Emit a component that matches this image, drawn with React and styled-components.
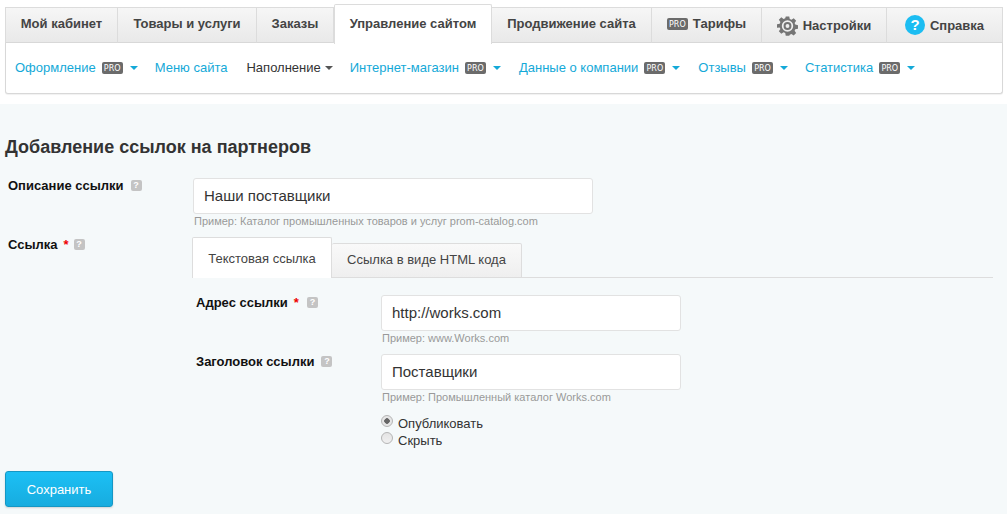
import React from "react";
import styled, { createGlobalStyle } from "styled-components";

const GlobalStyle = createGlobalStyle`
  html, body {
    margin: 0;
    padding: 0;
    height: 100%;
    background: #f5f9fa;
    font-family: "Liberation Sans", Arial, sans-serif;
    color: #333;
    overflow: hidden;
  }
`;

const Header = styled.header`
  background: #fff;
  height: 104px;
  padding: 3px 4px 0 5px;
  box-sizing: border-box;
`;

const TabStrip = styled.nav`
  display: flex;
  align-items: flex-end;
  height: 40px;
`;

const TopTab = styled.a`
  box-sizing: border-box;
  width: ${(p) => p.$w}px;
  height: ${(p) => (p.$active ? 40 : 36)}px;
  display: flex;
  align-items: center;
  justify-content: center;
  gap: ${(p) => p.$gap || 0}px;
  padding-bottom: ${(p) => (p.$active ? 3 : p.$pb ?? 3)}px;
  padding-top: ${(p) => p.$pt || 0}px;
  font-size: 13px;
  font-weight: bold;
  color: #444;
  background: ${(p) => (p.$active ? "#fff" : "linear-gradient(#f6f6f6, #e9e9e9)")};
  border: 1px solid #dcdcdc;
  border-left: ${(p) => (p.$first || p.$active ? "1px solid #dcdcdc" : "none")};
  border-bottom: ${(p) => (p.$active ? "none" : "1px solid #d8d8d8")};
  border-radius: ${(p) => (p.$active ? "2px 2px 0 0" : "0")};
  position: relative;
  z-index: ${(p) => (p.$active ? 1 : 0)};
  margin-bottom: ${(p) => (p.$active ? -1 : 0)}px;
`;

const SubNav = styled.div`
  box-sizing: border-box;
  height: 51px;
  display: flex;
  align-items: flex-start;
  padding: 15px 0 0 9px;
  background: #fff;
  border: 1px solid #d8d8d8;
  border-top: none;
  border-radius: 0 0 3px 3px;
  box-shadow: 0 1px 1px rgba(0, 0, 0, 0.06);
`;

const SubLink = styled.a`
  display: flex;
  align-items: center;
  height: 18px;
  margin-right: ${(p) => p.$mr}px;
  font-size: 13px;
  color: ${(p) => (p.$dark ? "#333" : "#14a9d8")};
  white-space: nowrap;
`;

const ProBadge = styled.span`
  display: inline-block;
  box-sizing: border-box;
  width: 21px;
  height: 12px;
  margin-left: ${(p) => p.$ml ?? 6}px;
  margin-top: 1px;
  border-radius: 2px;
  background: #6b6b6b;
  color: #fff;
  font-family: "DejaVu Sans", sans-serif;
  font-size: 8px;
  font-weight: normal;
  line-height: 13px;
  text-align: center;
`;

const Caret = styled.span`
  width: 0;
  height: 0;
  margin-left: ${(p) => p.$ml ?? 7}px;
  margin-top: 1px;
  border-left: 4px solid transparent;
  border-right: 4px solid transparent;
  border-top: 4px solid ${(p) => p.$color || "#14a9d8"};
`;

const Main = styled.main`
  padding: 32px 14px 0 5px;
`;

const Title = styled.h1`
  margin: 0 0 20px;
  font-size: 18px;
  line-height: 22px;
  font-weight: bold;
  color: #333;
`;

const Row = styled.div`
  display: grid;
  grid-template-columns: ${(p) => p.$label}px 1fr;
  margin-top: ${(p) => p.$mt || 0}px;
`;

const Label = styled.label`
  display: flex;
  align-items: center;
  height: 16px;
  margin: ${(p) => p.$mt ?? 0}px 0 0 ${(p) => p.$ml ?? 3}px;
  font-size: 13px;
  font-weight: bold;
  color: #111;
`;

const Star = styled.span`
  color: #e00;
  margin-left: 6px;
`;

const Help = styled.span`
  display: inline-block;
  width: 11px;
  height: 11px;
  margin-left: ${(p) => p.$ml ?? 7}px;
  margin-top: 1px;
  border-radius: 2px;
  background: #c4c4c4;
  color: #fff;
  font-size: 9px;
  font-weight: bold;
  line-height: 11px;
  text-align: center;
`;

const Input = styled.input`
  display: block;
  box-sizing: border-box;
  width: ${(p) => p.$w}px;
  height: 36px;
  padding: 0 10px 1px;
  background: #fff;
  border: 1px solid #e2e2e2;
  border-radius: 3px;
  outline: none;
  font-family: inherit;
  font-size: 15px;
  color: #333;
`;

const Hint = styled.div`
  height: 14px;
  margin: 0 0 0 1px;
  font-size: 11px;
  line-height: 14px;
  color: #999;
`;

const TabsBlock = styled.div`
  margin-top: 8px;
`;

const Tabs = styled.div`
  display: flex;
  align-items: flex-end;
  height: 41px;
  margin-left: -1px;
  border-bottom: 1px solid #ddd;
`;

const FormTab = styled.a`
  box-sizing: border-box;
  height: ${(p) => (p.$active ? 41 : 35)}px;
  width: ${(p) => p.$w}px;
  padding-top: ${(p) => (p.$active ? 13 : 8)}px;
  margin-bottom: -1px;
  text-align: center;
  font-size: 13px;
  line-height: 15px;
  color: #444;
  background: ${(p) => (p.$active ? "#fff" : "linear-gradient(#f9f9f9, #efefef)")};
  border: 1px solid #ddd;
  border-bottom: ${(p) => (p.$active ? "none" : "1px solid #ddd")};
  border-left: ${(p) => (p.$active ? "1px solid #ddd" : "none")};
  border-radius: 2px 2px 0 0;
`;

const Inner = styled.div`
  padding: 17px 0 0 3px;
`;

const RadioList = styled.div`
  margin: 11px 0 0 185px;
  display: flex;
  flex-direction: column;
`;

const RadioRow = styled.label`
  display: flex;
  align-items: center;
  height: 17px;
  font-size: 13px;
  color: #333;
`;

const RadioDot = styled.span`
  box-sizing: border-box;
  width: 12px;
  height: 12px;
  margin: -5px 5px 0 0;
  border-radius: 50%;
  border: 1px solid #b5b5b5;
  background: ${(p) =>
    p.$on
      ? "radial-gradient(circle, #666 0 2.5px, #e6e6e6 3px)"
      : "linear-gradient(#e4e4e4, #f0f0f0)"};
`;

const SaveButton = styled.button`
  display: block;
  box-sizing: border-box;
  width: 108px;
  height: 36px;
  margin-top: 22px;
  background: linear-gradient(#1cc0f5, #17acdf);
  border: 1px solid #1597c4;
  border-radius: 3px;
  box-shadow: 0 1px 2px rgba(0, 0, 0, 0.15);
  font-family: inherit;
  font-size: 13px;
  color: #fff;
`;

const Gear = () => (
  <svg width="21" height="22" viewBox="0 0 24 24" fill="#757575">
    <path
      fillRule="evenodd"
      d="M10 1h4l.6 3.1 1.9.8 2.6-1.8 2.8 2.8-1.8 2.6.8 1.9 3.1.6v4l-3.1.6-.8 1.900 1.8 2.600-2.800 2.800-2.600-1.800-1.900.8L14 23h-4l-.6-3.100-1.900-.8-2.600 1.800-2.800-2.800 1.800-2.600-.8-1.900L0 14v-4l3.100-.6.8-1.900L2.100 4.900l2.800-2.800 2.600 1.800 1.900-.8zM12 5.500a6.500 6.500 0 1 0 0 13 6.500 6.500 0 0 0 0-13z"
    />
    <path
      fillRule="evenodd"
      d="M12 7.500a4.500 4.500 0 1 0 0 9 4.500 4.500 0 0 0 0-9zM12 9.800a2.200 2.200 0 1 1 0 4.400 2.200 2.200 0 0 1 0-4.400z"
    />
  </svg>
);

const HelpCircle = () => (
  <svg width="20" height="20" viewBox="0 0 20 20">
    <circle cx="10" cy="10" r="10" fill="#1cbdf2" />
    <text x="10" y="15" textAnchor="middle" fontSize="15" fontWeight="bold" fill="#fff" fontFamily="Liberation Sans">
      ?
    </text>
  </svg>
);

const subItems = [
  { text: "Оформление", pro: true, mr: 17 },
  { text: "Меню сайта", mr: 19 },
  { text: "Наполнение", dark: true, mr: 17 },
  { text: "Интернет-магазин", pro: true, mr: 18 },
  { text: "Данные о компании", pro: true, mr: 18 },
  { text: "Отзывы", pro: true, mr: 17 },
  { text: "Статистика", pro: true, mr: 0 },
];

export default function App() {
  return (
    <>
      <GlobalStyle />
      <Header>
        <TabStrip>
          <TopTab $first $w={113}>Мой кабинет</TopTab>
          <TopTab $w={139}>Товары и услуги</TopTab>
          <TopTab $w={77}>Заказы</TopTab>
          <TopTab $active $w={158}>Управление сайтом</TopTab>
          <TopTab $w={160}>Продвижение сайта</TopTab>
          <TopTab $w={110} $gap={5}>
            <ProBadge $ml={0}>PRO</ProBadge>
            Тарифы
          </TopTab>
          <TopTab $w={125} $gap={5} $pb={0} $pt={1}><Gear />Настройки</TopTab>
          <TopTab $w={116} $gap={5} $pb={0}><HelpCircle />Справка</TopTab>
        </TabStrip>
        <SubNav>
          {subItems.map((item) => (
            <SubLink key={item.text} $dark={item.dark} $mr={item.mr}>
              {item.text}
              {item.pro && <ProBadge>PRO</ProBadge>}
              {item.text !== "Меню сайта" && (
                <Caret $ml={item.dark ? 4 : 7} $color={item.dark ? "#555" : undefined} />
              )}
            </SubLink>
          ))}
        </SubNav>
      </Header>
      <Main>
        <Title>Добавление ссылок на партнеров</Title>
        <Row $label={188}>
          <Label $mt={-1}>Описание ссылки <Help>?</Help></Label>
          <div>
            <Input $w={400} defaultValue="Наши поставщики" />
            <Hint>Пример: Каталог промышленных товаров и услуг prom-catalog.com</Hint>
          </div>
        </Row>
        <Row $label={188}>
          <Label $mt={8}>Ссылка <Star>*</Star> <Help $ml={5}>?</Help></Label>
          <TabsBlock>
            <Tabs>
              <FormTab $active $w={140}>Текстовая ссылка</FormTab>
              <FormTab $w={190}>Ссылка в виде HTML кода</FormTab>
            </Tabs>
            <Inner>
              <Row $label={185}>
                <Label $ml={0} $mt={-1}>Адрес ссылки <Star>*</Star> <Help $ml={8}>?</Help></Label>
                <div>
                  <Input $w={300} defaultValue="http://works.com" />
                  <Hint>Пример: www.Works.com</Hint>
                </div>
              </Row>
              <Row $label={185} $mt={9}>
                <Label $ml={0} $mt={-1}>Заголовок ссылки <Help>?</Help></Label>
                <div>
                  <Input $w={300} defaultValue="Поставщики" />
                  <Hint>Пример: Промышленный каталог Works.com</Hint>
                </div>
              </Row>
              <RadioList>
                <RadioRow><RadioDot $on />Опубликовать</RadioRow>
                <RadioRow><RadioDot />Скрыть</RadioRow>
              </RadioList>
            </Inner>
          </TabsBlock>
        </Row>
        <SaveButton>Сохранить</SaveButton>
      </Main>
    </>
  );
}
